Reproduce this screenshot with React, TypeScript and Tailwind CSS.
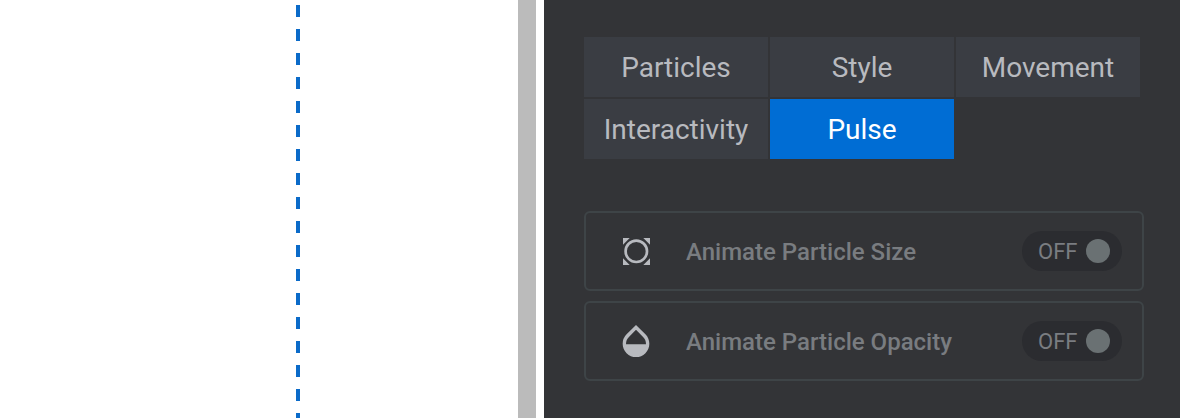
import { MdOpacity } from "react-icons/md";

function SizeIcon() {
  return (
    <svg viewBox="0 0 40 40" className="w-10 h-10" fill="currentColor">
      <circle cx="20.300" cy="20.300" r="10.700" fill="none" stroke="currentColor" strokeWidth="2.700" />
      <path d="M7 7h6.700L7 13.700zM34 7v6.700L27.300 7zM7 34v-6.700l6.700 6.700zM34 34h-6.700l6.700-6.700z" />
    </svg>
  );
}

const tabs = ["Particles", "Style", "Movement", "Interactivity", "Pulse"];

const options = [
  { label: "Animate Particle Size", icon: <SizeIcon /> },
  { label: "Animate Particle Opacity", icon: <MdOpacity className="w-10 h-10" /> },
];

function Toggle() {
  return (
    <button className="flex items-center justify-between w-[100px] h-10 pl-4 pr-3 rounded-full bg-[#2b2c30] text-[22px] text-[#7a7d81]">
      <span>OFF</span>
      <span className="w-6 h-6 rounded-full bg-[#6a7173]" />
    </button>
  );
}

export default function App() {
  const active = "Pulse";

  return (
    <div className="flex w-[1180px] h-[418px] overflow-hidden bg-white font-['Roboto',sans-serif]">
      {/* Canvas with the column guide */}
      <div className="w-[518px] pl-[296px] pt-[5px]">
        <div className="w-1 h-full bg-[repeating-linear-gradient(to_bottom,#0b6bc9_0_12px,transparent_12px_24px)]" />
      </div>
      <div className="w-[18px] bg-[#bbbbbb]" />

      {/* Settings panel */}
      <aside className="ml-2 w-[636px] pl-10 pt-[37px] bg-[#333437]">
        <div className="grid grid-cols-[repeat(3,184px)] gap-0.5">
          {tabs.map((tab) => (
            <button
              key={tab}
              className={`h-[60px] pt-0.5 text-[28px] ${
                tab === active ? "bg-[#006dd4] text-white" : "bg-[#3a3d43] text-[#b8babf]"
              }`}
            >
              {tab}
            </button>
          ))}
        </div>

        <div className="mt-[52px] w-[560px] space-y-2.5">
          {options.map((option) => (
            <div
              key={option.label}
              className="flex items-center h-20 pl-[30px] pr-5 border-2 border-[#3e4447] rounded-md"
            >
              <span className="text-[#b8babf]">{option.icon}</span>
              <span className="ml-[30px] mr-auto pt-0.5 text-2xl font-medium text-[#797c80]">
                {option.label}
              </span>
              <Toggle />
            </div>
          ))}
        </div>
      </aside>
    </div>
  );
}
